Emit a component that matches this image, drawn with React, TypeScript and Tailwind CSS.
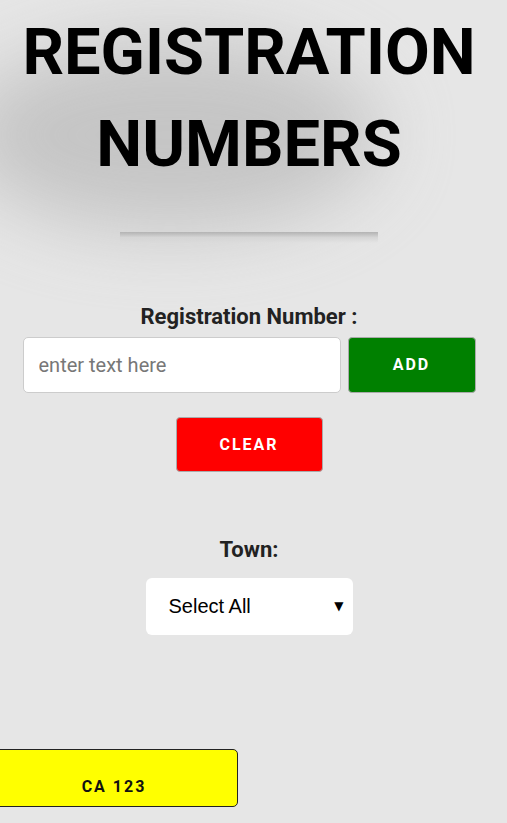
import React from "react";

export default function App() {
  return (
    <div
      className="relative min-h-[823px] w-full overflow-hidden bg-[#e6e6e6]"
      style={{ fontFamily: "Roboto, 'Liberation Sans', sans-serif" }}
    >
      <div className="pointer-events-none absolute left-[-40px] top-[40px] h-[190px] w-[420px] rounded-[50%] bg-[#bdbdbd] opacity-80 blur-[38px]" />
      <div className="relative w-[498px] text-center">
        <h1 className="pt-[6px] text-[65px] font-bold leading-[92px] text-black">
          REGISTRATION
          <br />
          NUMBERS
        </h1>
        <div className="mx-auto mt-[42px] h-[11px] w-[258px] bg-gradient-to-b from-[#b3b3b3] via-[#d6d6d6] to-transparent" />
        <div className="mt-[61px] text-[22px] font-bold leading-[26px] text-[#222]">
          Registration Number :
        </div>
        <div className="mt-[7px] flex items-center justify-center gap-[7px]">
          <input
            placeholder="enter text here"
            className="h-[56px] w-[318px] rounded-[5px] border border-[#cccccc] bg-white px-[15px] text-[20px] text-black outline-none placeholder:text-[#777]"
          />
          <button className="h-[56px] w-[128px] rounded-[4px] border border-[#aaa] bg-[#008000] text-[16px] font-bold tracking-[2px] text-white">
            ADD
          </button>
        </div>
        <div className="mt-[24px] flex justify-center">
          <button className="h-[55px] w-[147px] rounded-[4px] border border-[#aaa] bg-[#ff0000] text-[16px] font-bold tracking-[2px] text-white">
            CLEAR
          </button>
        </div>
        <div className="mt-[65px] text-[22px] font-bold leading-[26px] text-[#222]">Town:</div>
        <div className="mt-[15px] flex justify-center">
          <div className="flex h-[57px] w-[207px] items-center justify-between rounded-[6px] bg-white pb-[2px] pl-[23px] pr-[9px] text-black">
            <span className="text-[20px]" style={{ fontFamily: "'Liberation Sans', Arial, sans-serif" }}>
              Select All
            </span>
            <span className="text-[12px]" style={{ fontFamily: "'DejaVu Sans', sans-serif" }}>▼</span>
          </div>
        </div>
        <div className="mt-[114px] flex">
          <div className="ml-[-10px] h-[58px] w-[248px] rounded-[5px] border-[1.5px] border-[#222] bg-[#ffff00] pt-[25px] text-[16px] font-bold leading-[24px] tracking-[2px] text-[#111]">
            CA 123
          </div>
        </div>
      </div>
    </div>
  );
}
